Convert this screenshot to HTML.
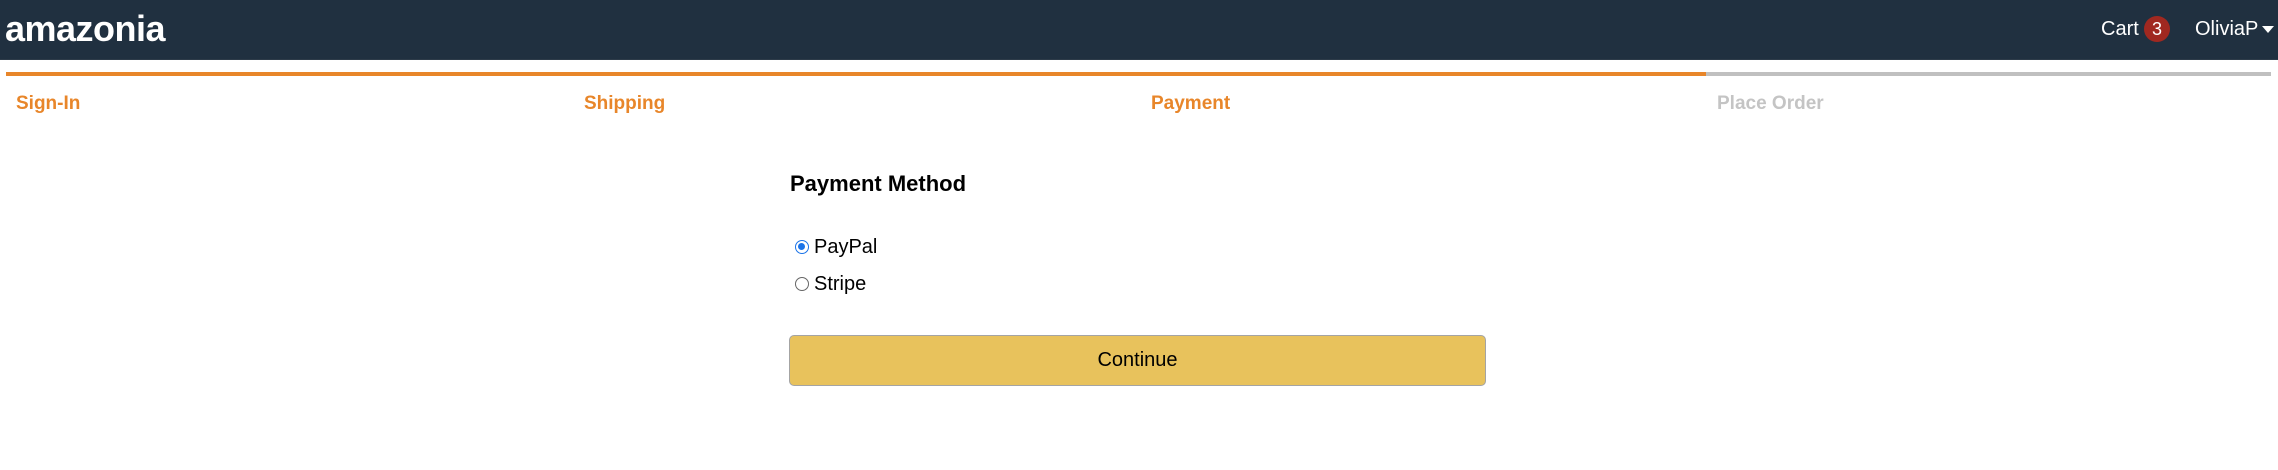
<!DOCTYPE html>
<html><head><style>
*{margin:0;padding:0;box-sizing:border-box}
body{width:2278px;height:470px;background:#fff;font-family:"Liberation Sans",Arial,sans-serif;position:relative;overflow:hidden}
.hdr{position:absolute;left:0;top:0;width:2278px;height:60px;background:#203040;border-bottom:1px solid #2d3b49}
.logo{position:absolute;left:5px;top:8px;color:#fff;font-weight:bold;font-size:36px;letter-spacing:-0.5px}
.nav{position:absolute;top:18px;color:#fff;font-size:20px}
.badge{position:absolute;left:2144px;top:16px;width:26px;height:26px;border-radius:13px;background:#a02820;color:#fff;font-size:18px;text-align:center;line-height:26px}
.caret{position:absolute;left:2262px;top:26px;width:0;height:0;border-left:6px solid transparent;border-right:6px solid transparent;border-top:7px solid #fff}
.bar{position:absolute;top:72px;height:4px}
.step{position:absolute;top:93px;font-weight:bold;font-size:19px;color:#e8862a}
h1{position:absolute;left:790px;top:171px;font-size:22px;font-weight:bold;color:#000}
.r{position:absolute;width:14px;height:14px;border-radius:50%;left:795px}
.lbl{position:absolute;left:814px;font-size:20px;color:#000}
.btn{position:absolute;left:789px;top:335px;width:697px;height:51px;background:#e8c25c;border:1px solid #a4a4a4;border-radius:5px;font-size:20px;text-align:center;line-height:49px;color:#000}
</style></head><body>
<div class="hdr">
<div class="logo">amazonia</div>
<div class="nav" style="left:2101px">Cart</div>
<div class="badge">3</div>
<div class="nav" style="left:2195px">OliviaP</div>
<div class="caret"></div>
</div>
<div class="bar" style="left:6px;width:1700px;background:#e8862a"></div>
<div class="bar" style="left:1706px;width:565px;background:#c0c0c0"></div>
<div class="step" style="left:16px">Sign-In</div>
<div class="step" style="left:584px">Shipping</div>
<div class="step" style="left:1151px">Payment</div>
<div class="step" style="left:1717px;color:#c4c4c4">Place Order</div>
<h1>Payment Method</h1>
<div class="r" style="top:240px;border:1.5px solid #1a73e8;background:#fff"><div style="position:absolute;left:2px;top:2px;width:7px;height:7px;border-radius:50%;background:#1a73e8"></div></div>
<div class="lbl" style="top:236px">PayPal</div>
<div class="r" style="top:277px;border:1px solid #666"></div>
<div class="lbl" style="top:273px">Stripe</div>
<div class="btn">Continue</div>
</body></html>
